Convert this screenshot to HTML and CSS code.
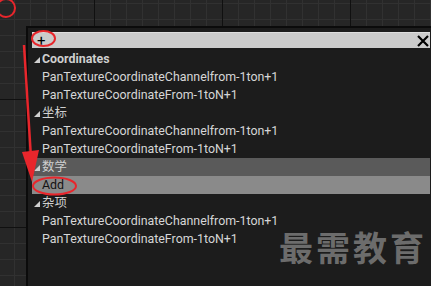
FILE: index.html
```html
<!DOCTYPE html>
<html lang="zh-CN">
<head>
    <meta charset="UTF-8">
    <title>Palette</title>
    <link rel="stylesheet" href="styles.css">
</head>
<body>

<div class="palette">
    <div class="search">
        <span class="plus">+</span>
        <svg class="close" width="12" height="12" viewBox="0 0 12 12">
            <path d="M1 1 L11 11 M11 1 L1 11" stroke="#000" stroke-width="2.2"/>
        </svg>
    </div>
    <ul class="tree">
        <li class="cat strong"><svg class="arrow" width="6" height="6" viewBox="0 0 6 6"><polygon points="6,0 6,6 0,6"/></svg>Coordinates</li>
        <li class="item">PanTextureCoordinateChannelfrom-1ton+1</li>
        <li class="item">PanTextureCoordinateFrom-1toN+1</li>
        <li class="cat"><svg class="arrow" width="6" height="6" viewBox="0 0 6 6"><polygon points="6,0 6,6 0,6"/></svg>坐标</li>
        <li class="item">PanTextureCoordinateChannelfrom-1ton+1</li>
        <li class="item">PanTextureCoordinateFrom-1toN+1</li>
        <li class="cat hover"><svg class="arrow" width="6" height="6" viewBox="0 0 6 6"><polygon points="6,0 6,6 0,6"/></svg>数学</li>
        <li class="item selected">Add</li>
        <li class="cat"><svg class="arrow" width="6" height="6" viewBox="0 0 6 6"><polygon points="6,0 6,6 0,6"/></svg>杂项</li>
        <li class="item">PanTextureCoordinateChannelfrom-1ton+1</li>
        <li class="item">PanTextureCoordinateFrom-1toN+1</li>
    </ul>
</div>

<div class="watermark">最需教育</div>

<!-- red annotations drawn over the screenshot -->
<svg class="marks" width="431" height="286" viewBox="0 0 431 286">
    <ellipse cx="6" cy="8" rx="9" ry="9" fill="none" stroke="#e8262c" stroke-width="2"/>
    <ellipse cx="43.5" cy="38.5" rx="11.5" ry="7.5" fill="none" stroke="#e8262c" stroke-width="2"/>
    <ellipse cx="54.5" cy="186" rx="21.5" ry="8.5" fill="none" stroke="#e8262c" stroke-width="2"/>
    <line x1="24" y1="45" x2="31" y2="158" stroke="#e8262c" stroke-width="2.5"/>
    <polygon points="22,152 39,150 32,182" fill="#e8262c"/>
</svg>

</body>
</html>
```

FILE: styles.css
```css
body {
    margin: 0;
    height: 286px;
    overflow: hidden;
    box-sizing: border-box;
    padding: 26px 0 0 26px;
    position: relative;
    font-family: Roboto, "Noto Sans CJK SC", sans-serif;
    background-color: #262626;
    background-image:
        linear-gradient(to right, #101010 1px, transparent 1px),
        linear-gradient(to bottom, #101010 1px, transparent 1px),
        linear-gradient(to right, #313131 1px, transparent 1px),
        linear-gradient(to bottom, #313131 1px, transparent 1px);
    background-size: 128px 128px, 128px 128px, 16px 16px, 16px 16px;
    background-position: 94px 0, 0 99px, 14px 0, 0 3px;
}

.palette {
    height: 100%;
    box-sizing: border-box;
    border-top: 2px solid #0b0b0b;
    border-left: 2px solid #0b0b0b;
    padding: 4px 1px 0 4px;
    background-color: #1c1c1c;
    overflow: hidden;
}

.search {
    height: 16px;
    box-sizing: border-box;
    background-color: #cbcbcb;
    border-top: 1px solid #dedede;
    display: flex;
    align-items: center;
    justify-content: space-between;
    padding: 0 1px 0 5px;
}

.search .plus {
    font-size: 15px;
    line-height: 14px;
    color: #000;
}

.tree {
    list-style: none;
    margin: 2px 0 0 0;
    padding: 0;
}

.tree li {
    height: 18px;
    line-height: 18px;
    font-size: 12.4px;
    white-space: nowrap;
    color: #d6d6d6;
}

.tree .item {
    padding-left: 10px;
}

.tree .cat {
    padding-left: 2px;
    color: #cfcfcf;
}

.tree .strong {
    font-weight: bold;
}

.tree .arrow {
    fill: #d0d0d0;
    margin-right: 2px;
    vertical-align: 0;
}

.tree .hover {
    background-color: #5a5a5a;
}

.tree .selected {
    background-color: #8a8a8a;
    color: #121212;
}

.watermark {
    position: absolute;
    left: 279px;
    top: 222px;
    font-size: 34px;
    font-weight: bold;
    letter-spacing: 3px;
    color: #6c6c6c;
    font-family: "Noto Sans CJK SC", sans-serif;
}

.marks {
    position: absolute;
    left: 0;
    top: 0;
}
```
